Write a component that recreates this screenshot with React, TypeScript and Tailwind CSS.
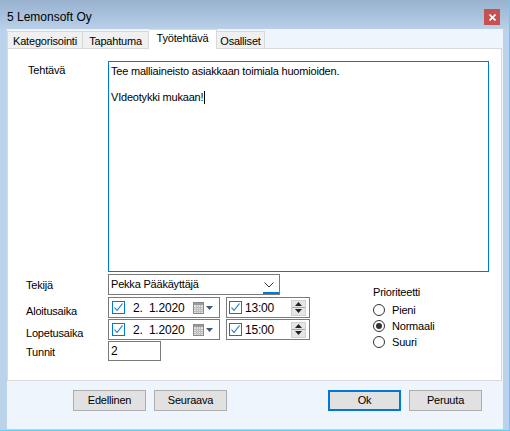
import React from "react";

function Check() {
  return (
    <span className="w-[13px] h-[13px] border border-[#0078d7] bg-white flex items-center justify-center shrink-0">
      <svg width="11" height="11" viewBox="0 0 11 11">
        <path d="M1.5 5.5 L4 8.5 L9.5 1.5" stroke="#0a6fd0" strokeWidth="1.1" fill="none" />
      </svg>
    </span>
  );
}

function CalendarIcon() {
  return (
    <svg width="20" height="12" viewBox="0 0 20 12" className="shrink-0">
      <rect x="0.5" y="0.5" width="10" height="11" fill="#e4e4e4" stroke="#8a8a8a" />
      <rect x="1" y="1" width="9" height="2" fill="#9a9a9a" />
      <path d="M1 5.5 H10 M1 7.5 H10 M1 9.5 H10 M3.5 3 V11 M5.5 3 V11 M7.5 3 V11" stroke="#bdbdbd" strokeWidth="1" />
      <path d="M13 4 H20 L16.5 8 Z" fill="#44587a" />
    </svg>
  );
}

function Spinner() {
  return (
    <div className="w-[15px] h-[16px] bg-[#e5e5e5] border border-[#d0d0d0] flex flex-col shrink-0">
      <div className="flex-1 flex items-center justify-center border-b border-[#a8a8a8]">
        <svg width="7" height="4" viewBox="0 0 7 4">
          <path d="M0 4 H7 L3.5 0 Z" fill="#222" />
        </svg>
      </div>
      <div className="flex-1 flex items-center justify-center">
        <svg width="7" height="4" viewBox="0 0 7 4">
          <path d="M0 0 H7 L3.5 4 Z" fill="#222" />
        </svg>
      </div>
    </div>
  );
}

function DateRow({ label, time }: { label: string; time: string }) {
  return (
    <div className="flex h-[21px] mt-[1px]">
      <div className="w-[82px] pt-[6px]">{label}</div>
      <div className="w-[112px] h-[21px] border border-[#7a7a7a] flex items-center pl-[3px]">
        <Check />
        <span className="ml-[8px] w-[60px] whitespace-pre text-[12px]">2.  1.2020</span>
        <CalendarIcon />
      </div>
      <div className="ml-[6px] w-[84px] h-[21px] border border-[#7a7a7a] flex items-center pl-[2px]">
        <Check />
        <span className="ml-[3px] flex-1 text-[12px]">{time}</span>
        <div className="mr-[3px]">
          <Spinner />
        </div>
      </div>
    </div>
  );
}

function Radio({ label, checked }: { label: string; checked?: boolean }) {
  return (
    <div className="flex items-center h-[16px]">
      <span className="w-[12px] h-[12px] rounded-full border border-[#333] bg-white flex items-center justify-center">
        {checked && <span className="w-[6px] h-[6px] rounded-full bg-[#333]" />}
      </span>
      <span className="ml-[7px]">{label}</span>
    </div>
  );
}

export default function App() {
  return (
    <div className="w-[510px] h-[431px] bg-[#bad2ea] border-r border-b border-[#58d4f2] flex flex-col font-['Liberation_Sans',Arial,sans-serif] text-[11px] tracking-[-0.2px] text-black overflow-hidden">
      {/* Title bar */}
      <div className="h-[29px] bg-linear-to-b from-[#97b1cf] to-[#b9d0e8] flex items-start pt-[9px] pl-[7px]">
        <span className="text-[12px] leading-[16px] tracking-normal">5 Lemonsoft Oy</span>
        <div className="ml-auto mr-[9px] w-[16px] h-[16px] bg-[#c75050] flex items-center justify-center">
          <svg width="7" height="7" viewBox="0 0 7 7">
            <path d="M0.5 0.5 L6.5 6.5 M6.5 0.5 L0.5 6.5" stroke="#fff" strokeWidth="1.6" />
          </svg>
        </div>
      </div>

      {/* Client area */}
      <div className="ml-[7px] w-[496px] h-[400px] bg-[#eef5fd] flex flex-col">
        {/* Tabs */}
        <div className="h-[19px] flex items-end">
          <div className="w-[76px] h-[17px] bg-[#f0f0f0] border border-b-0 border-[#d9d9d9] flex items-center justify-center pt-[2px]">
            Kategorisointi
          </div>
          <div className="w-[66px] h-[17px] bg-[#f0f0f0] border border-l-0 border-b-0 border-[#d9d9d9] flex items-center justify-center pt-[2px]">
            Tapahtuma
          </div>
          <div className="relative z-10 w-[68px] h-[20px] -mb-[1px] bg-white border border-l-0 border-b-0 border-[#d9d9d9] flex items-center justify-center pb-[2px]">
            Työtehtävä
          </div>
          <div className="w-[48px] h-[17px] bg-[#f0f0f0] border border-l-0 border-b-0 border-[#d9d9d9] flex items-center justify-center pt-[2px]">
            Osalliset
          </div>
        </div>

        {/* Panel */}
        <div className="w-[495px] h-[333px] bg-white border border-[#d9d9d9] pl-[18px]">
          <div className="flex mt-[12px]">
            <div className="w-[82px] pl-[2px] pt-[2px] leading-[15px]">Tehtävä</div>
            <div className="w-[381px] h-[211px] border border-[#0078d7] pl-[2px] pt-[3px] leading-[13px]">
              <div>Tee malliaineisto asiakkaan toimiala huomioiden.</div>
              <div className="h-[13px]" />
              <div className="flex items-center">
                VIdeotykki mukaan!
                <span className="ml-[1px] w-[1px] h-[13px] bg-black" />
              </div>
            </div>
          </div>

          <div className="flex mt-[2px]">
            <div className="w-[284px] flex flex-col">
              <div className="flex h-[21px] items-center">
                <div className="w-[82px] pt-[1px]">Tekijä</div>
                <div className="relative w-[172px] h-[21px] border border-[#7a7a7a] flex items-center pl-[2px]">
                  <span className="flex-1">Pekka Pääkäyttäjä</span>
                  <svg width="10" height="6" viewBox="0 0 10 6" className="mr-[5px]">
                    <path d="M0.5 0.5 L5 5 L9.5 0.5" stroke="#333" strokeWidth="1" fill="none" />
                  </svg>
                  <span className="absolute right-0 bottom-0 w-[16px] h-[2px] bg-[#0078d7]" />
                </div>
              </div>
              <div className="mt-[1px]">
                <DateRow label="Aloitusaika" time="13:00" />
              </div>
              <DateRow label="Lopetusaika" time="15:00" />
              <div className="flex h-[20px] mt-[1px]">
                <div className="w-[82px] pt-[3px]">Tunnit</div>
                <div className="w-[53px] h-[20px] border border-[#7a7a7a] flex items-center pl-[2px] text-[12px]">
                  2
                </div>
              </div>
            </div>

            <div className="ml-[63px] pt-[11px] flex flex-col">
              <div className="leading-[15px]">Prioriteetti</div>
              <div className="mt-[2px] flex flex-col">
                <Radio label="Pieni" />
                <Radio label="Normaali" checked />
                <Radio label="Suuri" />
              </div>
            </div>
          </div>
        </div>

        {/* Buttons */}
        <div className="flex mt-[9px] pl-[66px]">
          <button className="w-[73px] h-[21px] bg-[#e1e1e1] border border-[#adadad] flex items-center justify-center">
            Edellinen
          </button>
          <button className="ml-[8px] w-[73px] h-[21px] bg-[#e1e1e1] border border-[#adadad] flex items-center justify-center">
            Seuraava
          </button>
          <button className="ml-[101px] w-[73px] h-[21px] bg-[#e1e1e1] border-2 border-[#0078d7] flex items-center justify-center">
            Ok
          </button>
          <button className="ml-[8px] w-[73px] h-[21px] bg-[#e1e1e1] border border-[#adadad] flex items-center justify-center">
            Peruuta
          </button>
        </div>
      </div>
    </div>
  );
}
